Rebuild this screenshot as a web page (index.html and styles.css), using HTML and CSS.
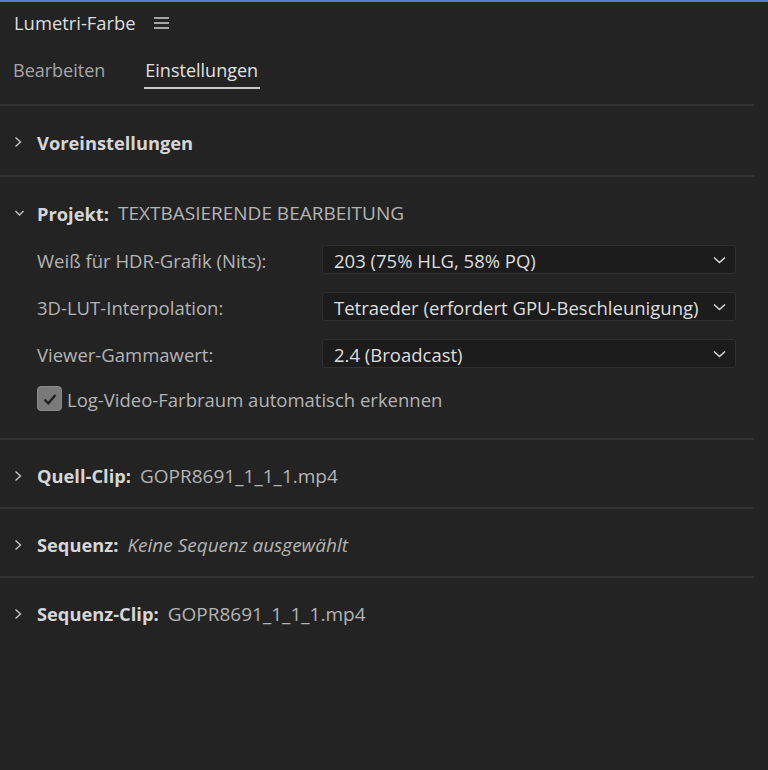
FILE: index.html
```html
<!DOCTYPE html>
<html lang="de">
<head>
<meta charset="utf-8">
<link rel="stylesheet" href="styles.css">
</head>
<body>
<div class="topline"></div>
<div class="panel">
  <div class="titlebar">
    <span class="title">Lumetri-Farbe</span>
    <svg class="menu" width="15" height="12" viewBox="0 0 15 12"><path d="M0 1h15M0 6h15M0 11h15" stroke="#cfcfcf" stroke-width="1.5"/></svg>
  </div>
  <div class="tabs">
    <span class="tab">Bearbeiten</span>
    <span class="tab active">Einstellungen</span>
  </div>

  <div class="section first">
    <div class="sechead">
      <span class="chev"><svg width="9" height="12" viewBox="0 0 9 12"><path d="M1.5 1.5l5 4.5-5 4.5" fill="none" stroke="#c4c4c4" stroke-width="1.4"/></svg></span>
      <span class="bold">Voreinstellungen</span>
    </div>
  </div>

  <div class="section project">
    <div class="sechead short">
      <span class="chev"><svg width="10" height="8" viewBox="0 0 10 8"><path d="M1.5 2l4 4 4-4" fill="none" stroke="#c4c4c4" stroke-width="1.4"/></svg></span>
      <span class="bold">Projekt:</span><span class="val">TEXTBASIERENDE BEARBEITUNG</span>
    </div>
    <div class="rows">
      <div class="row">
        <span class="label">Weiß für HDR-Grafik (Nits):</span>
        <div class="select"><span>203 (75% HLG, 58% PQ)</span><svg width="13" height="8" viewBox="0 0 13 8"><path d="M1 1.5l5.5 5 5.5-5" fill="none" stroke="#d8d8d8" stroke-width="1.6"/></svg></div>
      </div>
      <div class="row">
        <span class="label">3D-LUT-Interpolation:</span>
        <div class="select"><span>Tetraeder (erfordert GPU-Beschleunigung)</span><svg width="13" height="8" viewBox="0 0 13 8"><path d="M1 1.5l5.5 5 5.5-5" fill="none" stroke="#d8d8d8" stroke-width="1.6"/></svg></div>
      </div>
      <div class="row">
        <span class="label">Viewer-Gammawert:</span>
        <div class="select"><span>2.4 (Broadcast)</span><svg width="13" height="8" viewBox="0 0 13 8"><path d="M1 1.5l5.5 5 5.5-5" fill="none" stroke="#d8d8d8" stroke-width="1.6"/></svg></div>
      </div>
      <div class="check">
        <span class="box"><svg width="16" height="14" viewBox="0 0 16 14"><path d="M2.5 7.5l3.8 3.8L13.5 3" fill="none" stroke="#1e1e1e" stroke-width="2.2"/></svg></span>
        <span class="label">Log-Video-Farbraum automatisch erkennen</span>
      </div>
    </div>
  </div>

  <div class="section">
    <div class="sechead">
      <span class="chev"><svg width="9" height="12" viewBox="0 0 9 12"><path d="M1.5 1.5l5 4.5-5 4.5" fill="none" stroke="#c4c4c4" stroke-width="1.4"/></svg></span>
      <span class="bold">Quell-Clip:</span><span class="val">GOPR8691_1_1_1.mp4</span>
    </div>
  </div>

  <div class="section">
    <div class="sechead">
      <span class="chev"><svg width="9" height="12" viewBox="0 0 9 12"><path d="M1.5 1.5l5 4.5-5 4.5" fill="none" stroke="#c4c4c4" stroke-width="1.4"/></svg></span>
      <span class="bold">Sequenz:</span><span class="val it">Keine Sequenz ausgewählt</span>
    </div>
  </div>

  <div class="section last">
    <div class="sechead">
      <span class="chev"><svg width="9" height="12" viewBox="0 0 9 12"><path d="M1.5 1.5l5 4.5-5 4.5" fill="none" stroke="#c4c4c4" stroke-width="1.4"/></svg></span>
      <span class="bold">Sequenz-Clip:</span><span class="val">GOPR8691_1_1_1.mp4</span>
    </div>
  </div>
</div>
</body>
</html>
```
FILE: styles.css
```css
html, body {
  margin: 0;
  padding: 0;
  background: #232323;
}
body {
  font-family: "Open Sans", "Lato", sans-serif;
  font-size: 18.5px;
  color: #c8c8c8;
  width: 768px;
  height: 770px;
  overflow: hidden;
}
.topline {
  height: 2px;
  background: #4680dc;
}
.panel {
  width: 754px;
}
.titlebar {
  height: 43px;
  display: flex;
  align-items: center;
  padding-left: 14px;
  gap: 18px;
}
.title {
  font-size: 18.4px;
  color: #dedede;
  margin-top: -2px;
}
.menu {
  margin-top: -1px;
}
.tabs {
  display: flex;
  gap: 40px;
  padding-left: 13px;
  height: 59px;
  border-bottom: 2px solid #333333;
}
.tab {
  font-size: 18px;
  color: #a6a6a6;
  padding-top: 13px;
}
.tab.active {
  color: #e0e0e0;
  border-bottom: 2px solid #c8c8c8;
  height: 29px;
  padding: 13px 2px 0 1px;
  margin-left: -1px;
}
.section {
  border-bottom: 2px solid #333333;
  padding: 0 0 0 14px;
}
.section.last {
  border-bottom: none;
}
.sechead {
  height: 67px;
  display: flex;
  align-items: center;
  padding-top: 4px;
  box-sizing: border-box;
}
.first .sechead {
  height: 69px;
  padding-top: 3px;
}
.chev {
  width: 23px;
  flex: none;
  display: flex;
  align-items: center;
}
.bold {
  font-size: 18.3px;
  font-weight: 700;
  color: #d6d6d6;
  margin-right: 9px;
}
.val {
  font-size: 19px;
  color: #b4b4b4;
}
.val.it {
  font-style: italic;
}
.project {
  padding-top: 20px;
  padding-bottom: 27px;
}
.sechead.short {
  height: 30px;
  padding-top: 2px;
}
.rows {
  padding-left: 23px;
  padding-right: 18px;
  margin-top: 18px;
  display: flex;
  flex-direction: column;
  gap: 18px;
}
.row {
  display: flex;
  align-items: center;
  justify-content: space-between;
  height: 29px;
}
.row .label {
  padding-top: 2px;
}
.label {
  color: #b4b4b4;
}
.select {
  width: 414px;
  height: 29px;
  box-sizing: border-box;
  background: #1c1c1c;
  border: 1px solid #2f2f2f;
  border-radius: 3px;
  display: flex;
  align-items: center;
  justify-content: space-between;
  padding: 1px 9px 0 11px;
  color: #dedede;
}
.check {
  display: flex;
  align-items: center;
  gap: 5px;
  height: 25px;
}
.check .label {
  padding-top: 1px;
}
.box {
  width: 25px;
  height: 25px;
  box-sizing: border-box;
  background: #7a7a7a;
  border: 1px solid #8a8a8a;
  border-radius: 4px;
  display: flex;
  align-items: center;
  justify-content: center;
}
```
